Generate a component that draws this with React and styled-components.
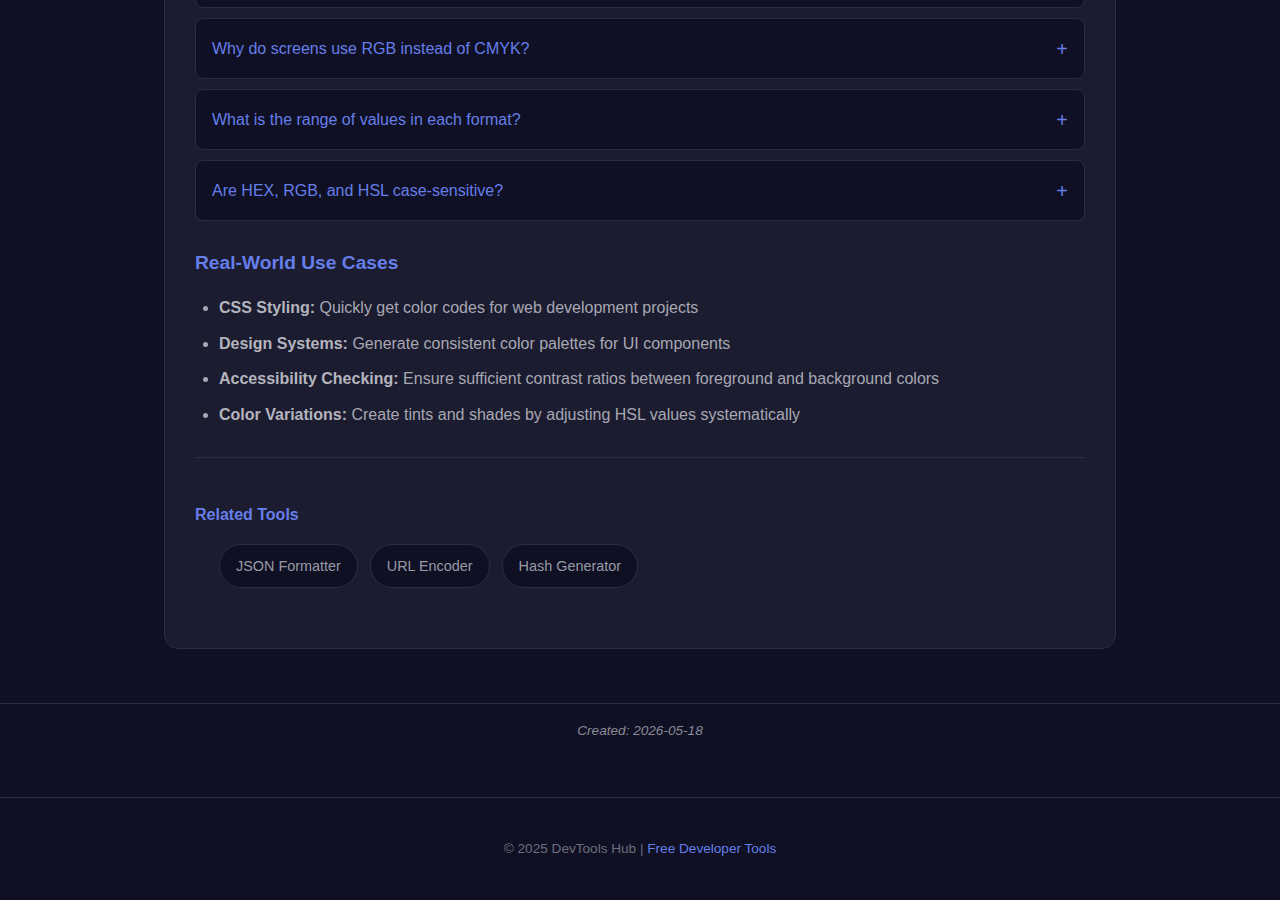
import React from "react";
import styled, { createGlobalStyle } from "styled-components";

const accent = "#667eea";
const pageBg = "#0f1023";
const cardBg = "#1b1c2f";
const line = "#2a2b47";

const Global = createGlobalStyle`
  html, body {
    margin: 0;
    padding: 0;
    background: ${pageBg};
    font-family: "Liberation Sans", Arial, sans-serif;
    color: #a8a8b3;
  }
`;

const Main = styled.main`
  max-width: 952px;
  margin: -84px auto 0;
  padding-bottom: 54px;
`;

const Card = styled.section`
  background: ${cardBg};
  border: 1px solid ${line};
  border-radius: 14px;
  padding: 30px 30px 60px;
`;

const Faq = styled.div`
  display: flex;
  flex-direction: column;
  gap: 10px;
`;

const FaqItem = styled.button`
  display: flex;
  align-items: center;
  justify-content: space-between;
  height: 61px;
  padding: 0 16px;
  background: ${pageBg};
  border: 1px solid ${line};
  border-radius: 8px;
  color: ${accent};
  font: 16px "Liberation Sans", Arial, sans-serif;
  text-align: left;
  cursor: pointer;
`;

const Plus = styled.span`
  font-size: 20px;
  line-height: 1;
`;

const SectionTitle = styled.h2`
  margin: 31px 0 21px;
  color: ${accent};
  font-size: 19.2px;
  font-weight: 700;
`;

const UseList = styled.ul`
  margin: 0;
  padding-left: 24px;
  li {
    font-size: 16px;
    line-height: 25.6px;
    margin-bottom: 10px;
  }
  strong {
    color: #b4b4be;
  }
`;

const Divider = styled.hr`
  border: 0;
  border-top: 1px solid ${line};
  margin: 30px 0 48px;
`;

const SubTitle = styled.h3`
  margin: 0 0 20px;
  color: ${accent};
  font-size: 16px;
  font-weight: 700;
`;

const Chips = styled.div`
  display: flex;
  gap: 12px;
  padding-left: 24px;
`;

const Chip = styled.a`
  display: inline-flex;
  align-items: center;
  height: 44px;
  box-sizing: border-box;
  padding: 0 16px;
  border: 1px solid ${line};
  border-radius: 22px;
  background: ${pageBg};
  color: #9a9aa6;
  font-size: 14.4px;
  text-decoration: none;
`;

const Footer = styled.footer`
  border-top: 1px solid ${line};
  text-align: center;
  font-size: 13.6px;
  padding: ${(p) => p.$pad};
  color: ${(p) => p.$color};
  font-style: ${(p) => (p.$italic ? "italic" : "normal")};
  a {
    color: ${accent};
    text-decoration: none;
  }
`;

const faqs = [
  "What is the difference between HEX, RGB, and HSL?",
  "Why do screens use RGB instead of CMYK?",
  "What is the range of values in each format?",
  "Are HEX, RGB, and HSL case-sensitive?",
];

const uses = [
  ["CSS Styling:", "Quickly get color codes for web development projects"],
  ["Design Systems:", "Generate consistent color palettes for UI components"],
  ["Accessibility Checking:", "Ensure sufficient contrast ratios between foreground and background colors"],
  ["Color Variations:", "Create tints and shades by adjusting HSL values systematically"],
];

const tools = ["JSON Formatter", "URL Encoder", "Hash Generator"];

export default function App() {
  return (
    <>
      <Global />
      <Main>
        <Card>
          <Faq>
            {faqs.map((q) => (
              <FaqItem key={q}>
                <span>{q}</span>
                <Plus>+</Plus>
              </FaqItem>
            ))}
          </Faq>
          <SectionTitle>Real-World Use Cases</SectionTitle>
          <UseList>
            {uses.map(([label, text]) => (
              <li key={label}>
                <strong>{label}</strong> {text}
              </li>
            ))}
          </UseList>
          <Divider />
          <SubTitle>Related Tools</SubTitle>
          <Chips>
            {tools.map((t) => (
              <Chip key={t} href="#">
                {t}
              </Chip>
            ))}
          </Chips>
        </Card>
      </Main>
      <Footer $pad="19px 0 59px" $color="#8a8a96" $italic>
        Created: 2026-05-18
      </Footer>
      <Footer $pad="43px 0 44px" $color="#6e6e7c">
        © 2025 DevTools Hub | <a href="#">Free Developer Tools</a>
      </Footer>
    </>
  );
}
